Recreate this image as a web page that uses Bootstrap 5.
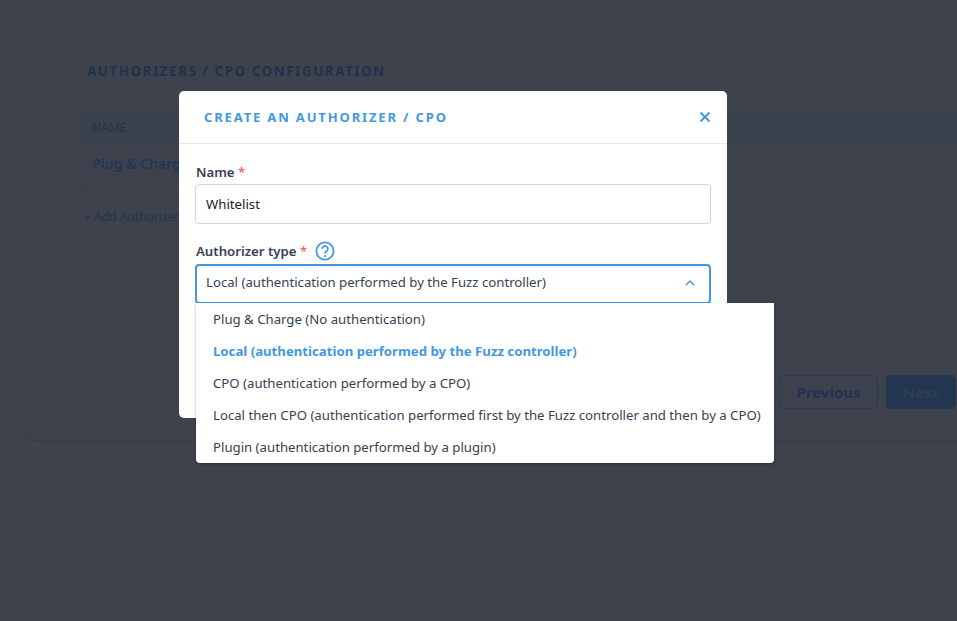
<!DOCTYPE html>
<html lang="en">
<head>
<meta charset="utf-8">
<title>Create an authorizer</title>
<link href="https://cdn.jsdelivr.net/npm/bootstrap@5.3.0/dist/css/bootstrap.min.css" rel="stylesheet">
<style>
html,body{height:621px;overflow:hidden}
body{background:#3e424c;font-family:"Noto Sans","Open Sans",sans-serif;font-size:14px;color:#2d3748;position:relative}
.shell{padding:0 0 0 15px;height:442px}
.shell-outer{height:100%;border-left:1px solid #3a3e48;border-bottom:1px solid #3a3e48;border-bottom-left-radius:6px;padding-left:11px}
.shell-inner{height:100%;border-left:1px solid #3a3e48;border-bottom:1px solid #3a3e48;border-bottom-left-radius:6px;display:flex;flex-direction:column}
.bg-title{margin:0;padding:60px 0 15px 59px;font-size:13.4px;line-height:22px;font-weight:700;letter-spacing:1.55px;color:#1e324c;text-transform:uppercase}
.bg-rule{border-top:1px solid #3a3e48;margin-left:36px}
.bg-table{margin:16px 0 0 51px;border:1px solid #3a3e48;border-right:0;border-radius:6px 0 0 6px}
.bg-head{background:#3a404c;padding:0 12px;height:27px;line-height:26px;font-size:12px;color:#2a3140;border-bottom:1px solid #3a3e48}
.bg-row{padding:0 12px;height:46px;line-height:44px;font-size:14px;font-weight:600;color:#1f3856}
.bg-add{margin:17px 0 0 56px;font-size:12px;line-height:22px;color:#203652}
.bg-actions{margin-top:147px;padding-right:1px;gap:8px}
.bg-btn{height:34px;font-size:15px;font-weight:700;border-radius:4px;padding:0;line-height:32px;text-align:center}
.bg-prev{width:99px;border:1px solid #2a3d55;color:#1e3452}
.bg-next{width:70px;background:#223650;border:1px solid #223650;color:#2e3e52}
.dlg{position:absolute;left:179px;top:91px;width:548px;height:327px;background:#fff;border-radius:5px}
.dlg-head{height:53px;border-bottom:1px solid #e2e8f0;padding:0 16px 0 25px}
.dlg-title{margin:0;font-size:13px;font-weight:700;letter-spacing:1.85px;color:#4299e1;text-transform:uppercase;line-height:1;padding-top:1px}
.dlg-close{background:none;border:0;padding:0;width:12px;height:12px;display:flex}
.dlg-body{padding:18px 16px 0}
.fld-label{font-size:13.2px;font-weight:600;color:#364152;line-height:20px;margin:0;padding-left:1px}
.req{color:#f56565}
.fld-input{height:40px;margin-top:2px;border:1px solid #cbd5e0;border-radius:4px;padding:0 10px;font-size:13.2px;line-height:38px;color:#1a202c}
.type-label{margin-top:17px;height:20px;gap:8px}
.help{width:20px;height:20px;display:block}
.fld-select{height:40px;margin-top:3px;border:2px solid #4299e1;border-radius:4px;padding:0 14px 2px 9px;font-size:13.2px;color:#364152}
.menu{position:absolute;left:196px;top:303px;width:578px;height:160px;background:#fff;border-radius:0 0 4px 4px;box-shadow:0 1px 3px rgba(0,0,0,.3)}
.opt{height:32px;line-height:32px;padding-left:17px;font-size:13.2px;color:#364152;white-space:nowrap}
.opt-on{color:#4299e1;font-weight:700}
</style>
</head>
<body>
<div class="shell">
  <div class="shell-outer">
    <div class="shell-inner">
      <h2 class="bg-title">Authorizers / CPO configuration</h2>
      <div class="bg-rule"></div>
      <div class="bg-table">
        <div class="bg-head">NAME</div>
        <div class="bg-row">Plug &amp; Charge</div>
      </div>
      <div class="bg-add">+ Add Authorizer</div>
      <div class="bg-actions d-flex justify-content-end">
        <div class="bg-btn bg-prev">Previous</div>
        <div class="bg-btn bg-next">Next</div>
      </div>
    </div>
  </div>
</div>

<div class="dlg">
  <div class="dlg-head d-flex align-items-center justify-content-between">
    <h5 class="dlg-title">Create an authorizer / CPO</h5>
    <button class="dlg-close" type="button" aria-label="Close">
      <svg width="12" height="12" viewBox="0 0 12 12"><path d="M1.5 1.5l9 9M10.5 1.5l-9 9" stroke="#4299e1" stroke-width="2" fill="none"/></svg>
    </button>
  </div>
  <div class="dlg-body">
    <div class="fld-label">Name <span class="req">*</span></div>
    <div class="fld-input">Whitelist</div>
    <div class="type-label d-flex align-items-center">
      <div class="fld-label">Authorizer type <span class="req">*</span></div>
      <svg class="help" viewBox="0 0 20 20"><circle cx="10" cy="10" r="8.6" fill="none" stroke="#4299e1" stroke-width="1.8"/><path d="M7.2 7.8a2.8 2.8 0 1 1 4.4 2.3c-1 .7-1.6 1.2-1.6 2.3" fill="none" stroke="#4299e1" stroke-width="1.8"/><circle cx="10" cy="15" r="1.1" fill="#4299e1"/></svg>
    </div>
    <div class="fld-select d-flex align-items-center justify-content-between">
      <span>Local (authentication performed by the Fuzz controller)</span>
      <svg width="10" height="6" viewBox="0 0 10 6"><path d="M.8 5.2L5 1l4.2 4.2" fill="none" stroke="#4299e1" stroke-width="1.4"/></svg>
    </div>
  </div>
</div>

<div class="menu">
  <div class="opt">Plug &amp; Charge (No authentication)</div>
  <div class="opt opt-on">Local (authentication performed by the Fuzz controller)</div>
  <div class="opt">CPO (authentication performed by a CPO)</div>
  <div class="opt">Local then CPO (authentication performed first by the Fuzz controller and then by a CPO)</div>
  <div class="opt">Plugin (authentication performed by a plugin)</div>
</div>
<script src="https://cdn.jsdelivr.net/npm/bootstrap@5.3.0/dist/js/bootstrap.bundle.min.js"></script>
</body>
</html>
